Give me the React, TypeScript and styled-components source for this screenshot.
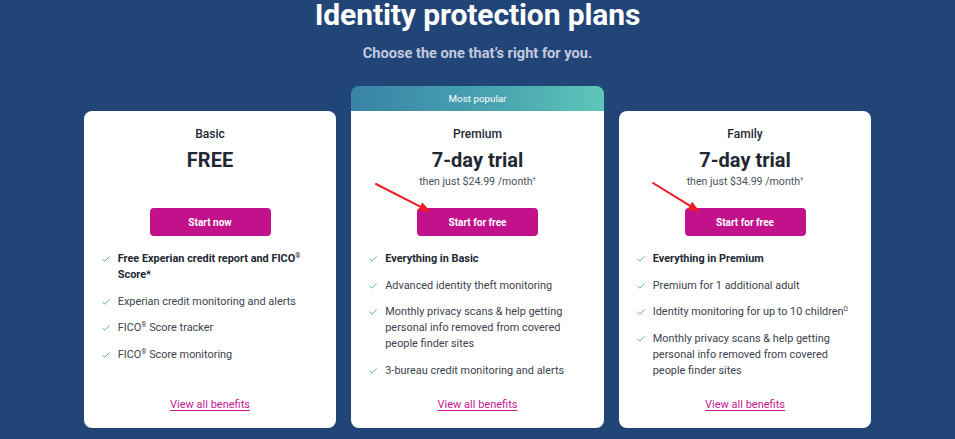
import React from 'react';
import styled, { createGlobalStyle } from 'styled-components';

const GlobalStyle = createGlobalStyle`
  html, body {
    margin: 0;
    padding: 0;
    background: #224578;
  }
  body {
    font-family: Roboto, 'Liberation Sans', Arial, sans-serif;
    -webkit-font-smoothing: antialiased;
  }
`;

interface Plan {
  name: string;
  price: string;
  note?: string;
  cta: string;
  popular?: boolean;
  features: React.ReactNode[];
}

const plans: Plan[] = [
  {
    name: 'Basic',
    price: 'FREE',
    cta: 'Start now',
    features: [
      <b key="a">Free Experian credit report and FICO<sup>®</sup> Score*</b>,
      'Experian credit monitoring and alerts',
      <span key="c">FICO<sup>®</sup> Score tracker</span>,
      <span key="d">FICO<sup>®</sup> Score monitoring</span>,
    ],
  },
  {
    name: 'Premium',
    price: '7-day trial',
    note: '$24.99',
    cta: 'Start for free',
    popular: true,
    features: [
      <b key="a">Everything in Basic</b>,
      'Advanced identity theft monitoring',
      'Monthly privacy scans & help getting personal info removed from covered people finder sites',
      '3-bureau credit monitoring and alerts',
    ],
  },
  {
    name: 'Family',
    price: '7-day trial',
    note: '$34.99',
    cta: 'Start for free',
    features: [
      <b key="a">Everything in Premium</b>,
      'Premium for 1 additional adult',
      <span key="c">Identity monitoring for up to 10 children<sup>Ω</sup></span>,
      'Monthly privacy scans & help getting personal info removed from covered people finder sites',
    ],
  },
];

// Layout
const Page = styled.main`
  position: relative;
  width: 955px;
  height: 439px;
  overflow: hidden;
  display: flex;
  flex-direction: column;
  align-items: center;
`;

const Title = styled.h1`
  margin: 0;
  font-size: 30px;
  line-height: 30px;
  font-weight: 700;
  color: #ffffff;
  letter-spacing: -0.1px;
`;

const Subtitle = styled.p`
  margin: 12.5px 0 0;
  font-size: 14.6px;
  line-height: 20px;
  font-weight: 700;
  color: #c2cadf;
`;

const PlanRow = styled.div`
  margin-top: 23.5px;
  display: flex;
  gap: 15px;
  align-items: stretch;
  height: 342px;
`;

const Column = styled.div<{ $popular?: boolean }>`
  width: 252.5px;
  display: flex;
  flex-direction: column;
  padding-top: ${({ $popular }) => ($popular ? '0' : '25px')};
`;

const Banner = styled.div`
  height: 25px;
  border-radius: 8px 8px 0 0;
  background: linear-gradient(90deg, #3883a7 0%, #4aa6b1 60%, #5dc7b8 100%);
  color: #ffffff;
  font-size: 9.8px;
  display: flex;
  align-items: center;
  justify-content: center;
`;

const Card = styled.section<{ $popular?: boolean }>`
  flex: 1;
  background: #ffffff;
  border-radius: ${({ $popular }) => ($popular ? '0 0 8px 8px' : '8px')};
  padding: 15px 18px 15.5px;
  display: flex;
  flex-direction: column;
  align-items: center;
  color: #222833;
`;

const PlanName = styled.h2`
  margin: 0;
  font-size: 12px;
  line-height: 16px;
  font-weight: 500;
`;

const Price = styled.div`
  margin-top: 6px;
  font-size: 20px;
  line-height: 24px;
  font-weight: 700;
`;

const PriceNote = styled.div`
  height: 14px;
  font-size: 10.6px;
  line-height: 14px;
  color: #4a4f5a;

  sup {
    font-size: 6px;
    vertical-align: 4px;
  }
`;

const CtaButton = styled.button`
  margin-top: 22px;
  width: 121px;
  height: 28px;
  border: none;
  border-radius: 4px;
  background: #c1118b;
  color: #ffffff;
  font-family: inherit;
  font-size: 10px;
  font-weight: 700;
  cursor: pointer;
`;

const Features = styled.ul`
  list-style: none;
  margin: 15px 0 0;
  padding: 0;
  align-self: stretch;
  display: flex;
  flex-direction: column;
  gap: 10.5px;
`;

const Feature = styled.li`
  display: flex;
  font-size: 10.9px;
  line-height: 16px;
  color: #3d424c;

  b {
    font-weight: 700;
    color: #222833;
  }

  sup {
    font-size: 6.5px;
    line-height: 0;
    vertical-align: 4px;
  }
`;

const CheckCell = styled.span`
  flex: 0 0 16px;
  height: 16px;
  display: flex;
  align-items: center;
`;

const FeatureText = styled.span`
  flex: 1;
`;

const BenefitsLink = styled.a`
  margin-top: auto;
  font-size: 11px;
  line-height: 16px;
  color: #c4178f;
  text-decoration: underline;
  text-underline-offset: 2px;
  cursor: pointer;
`;

// Annotation arrows drawn over the page
const Annotations = styled.svg`
  position: absolute;
  inset: 0;
  pointer-events: none;
`;

const Check = () => (
  <svg width="8" height="6" viewBox="0 0 8 6">
    <polyline
      points="0.6,3.2 2.9,5.2 7.4,0.7"
      fill="none"
      stroke="#5cbf84"
      strokeWidth="1"
      strokeLinecap="round"
      strokeLinejoin="round"
    />
  </svg>
);

const Arrow: React.FC<{ x1: number; y1: number; x2: number; y2: number }> = ({ x1, y1, x2, y2 }) => {
  const angle = Math.atan2(y2 - y1, x2 - x1);
  const len = 12;
  const half = 4.5;
  const bx = x2 - len * Math.cos(angle);
  const by = y2 - len * Math.sin(angle);
  const px = -Math.sin(angle) * half;
  const py = Math.cos(angle) * half;
  return (
    <g>
      <line x1={x1} y1={y1} x2={bx} y2={by} stroke="#ee1c25" strokeWidth="2" strokeLinecap="round" />
      <polygon points={`${x2},${y2} ${bx + px},${by + py} ${bx - px},${by - py}`} fill="#ee1c25" />
    </g>
  );
};

const PlanCard: React.FC<{ plan: Plan }> = ({ plan }) => (
  <Column $popular={plan.popular}>
    {plan.popular && <Banner>Most popular</Banner>}
    <Card $popular={plan.popular}>
      <PlanName>{plan.name}</PlanName>
      <Price>{plan.price}</Price>
      <PriceNote>
        {plan.note && (
          <>
            then just {plan.note} /month<sup>†</sup>
          </>
        )}
      </PriceNote>
      <CtaButton>{plan.cta}</CtaButton>
      <Features>
        {plan.features.map((f, i) => (
          <Feature key={i}>
            <CheckCell>
              <Check />
            </CheckCell>
            <FeatureText>{f}</FeatureText>
          </Feature>
        ))}
      </Features>
      <BenefitsLink>View all benefits</BenefitsLink>
    </Card>
  </Column>
);

export default function App() {
  return (
    <>
      <GlobalStyle />
      <Page>
        <Title>Identity protection plans</Title>
        <Subtitle>Choose the one that’s right for you.</Subtitle>
        <PlanRow>
          {plans.map((p) => (
            <PlanCard key={p.name} plan={p} />
          ))}
        </PlanRow>
        <Annotations width="955" height="439">
          <Arrow x1={376} y1={184} x2={431} y2={212} />
          <Arrow x1={653} y1={183} x2={700} y2={212} />
        </Annotations>
      </Page>
    </>
  );
}
